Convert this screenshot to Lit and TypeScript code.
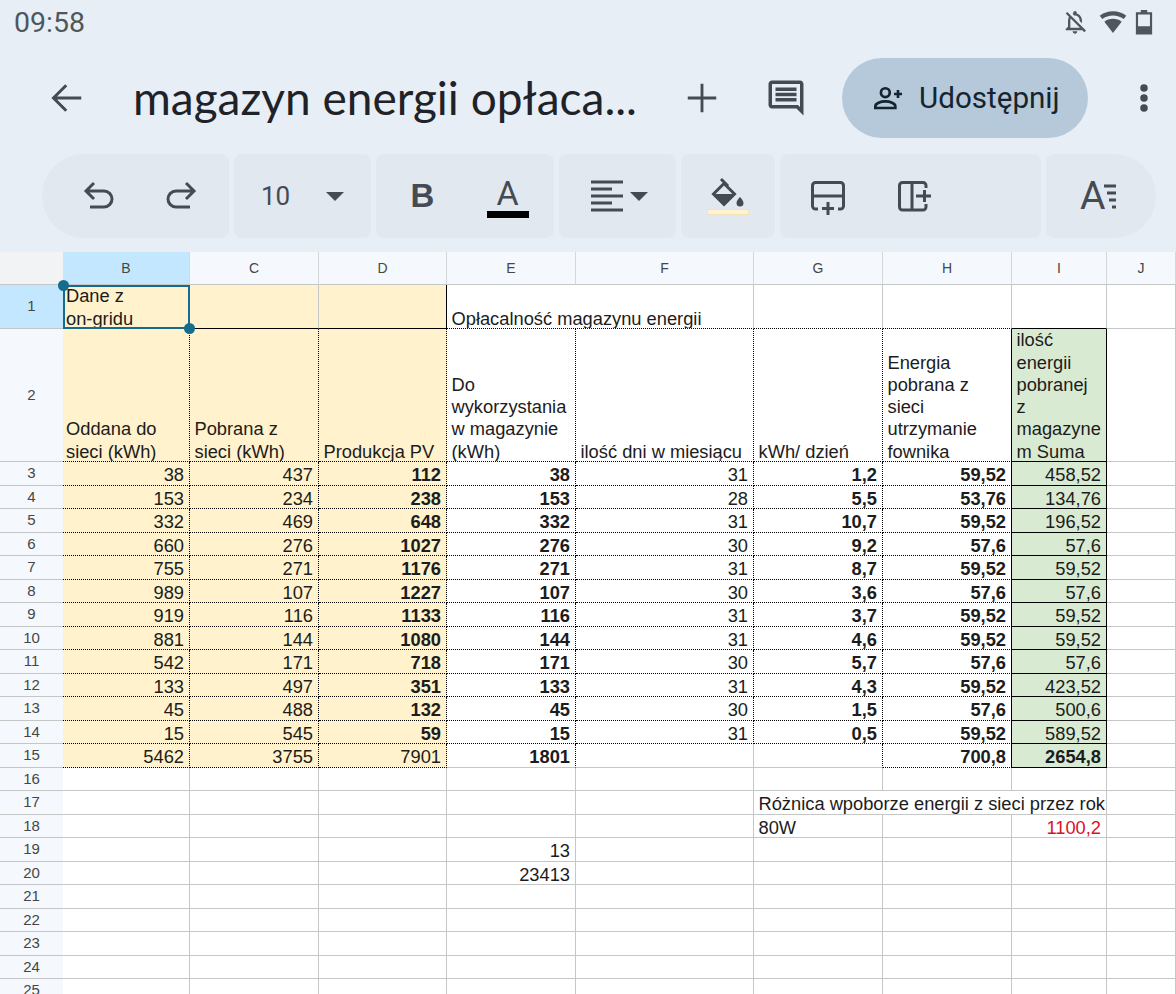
import { LitElement, css, html, svg } from "lit";
import { customElement } from "lit/decorators.js";

type Fill = "" | "y" | "g";
interface Cell {
  text?: string;
  bold?: boolean;
  right?: boolean;
  red?: boolean;
  fill?: Fill;
  span?: number;
  // border kinds: d = dotted black, s = solid black, empty = grey grid line
  br?: "" | "d" | "s";
  bb?: "" | "d" | "s";
  first?: boolean;
}

const COLS = ["B", "C", "D", "E", "F", "G", "H", "I", "J"];

const B = [38, 153, 332, 660, 755, 989, 919, 881, 542, 133, 45, 15];
const C = [437, 234, 469, 276, 271, 107, 116, 144, 171, 497, 488, 545];
const D = [112, 238, 648, 1027, 1176, 1227, 1133, 1080, 718, 351, 132, 59];
const E = [38, 153, 332, 276, 271, 107, 116, 144, 171, 133, 45, 15];
const F = [31, 28, 31, 30, 31, 30, 31, 31, 30, 31, 30, 31];
const G = ["1,2", "5,5", "10,7", "9,2", "8,7", "3,6", "3,7", "4,6", "5,7", "4,3", "1,5", "0,5"];
const H = ["59,52", "53,76", "59,52", "57,6", "59,52", "57,6", "59,52", "59,52", "57,6", "59,52", "57,6", "59,52"];
const I = ["458,52", "134,76", "196,52", "57,6", "59,52", "57,6", "59,52", "59,52", "57,6", "423,52", "500,6", "589,52"];

function buildRows(): Cell[][] {
  const rows: Cell[][] = [];
  rows.push([
    { text: "Dane z\non-gridu", fill: "y", bb: "s", first: true },
    { fill: "y", bb: "s" },
    { fill: "y", bb: "s", br: "s" },
    { text: "Opłacalność magazynu energii", span: 2, bb: "d" },
    { bb: "d" },
    { bb: "d" },
    { bb: "s" },
    {},
  ]);
  rows.push([
    { text: "Oddana do\nsieci (kWh)", fill: "y", br: "d", bb: "d", first: true },
    { text: "Pobrana z\nsieci (kWh)", fill: "y", br: "d", bb: "d" },
    { text: "Produkcja PV", fill: "y", br: "d", bb: "d" },
    { text: "Do\nwykorzystania\nw magazynie\n(kWh)", br: "d", bb: "d" },
    { text: "ilość dni w miesiącu", br: "d", bb: "d" },
    { text: "kWh/ dzień", br: "d", bb: "d" },
    { text: "Energia\npobrana z\nsieci\nutrzymanie\nfownika", br: "s", bb: "d" },
    { text: "ilość\nenergii\npobranej\nz\nmagazyne\nm Suma", fill: "g", br: "s", bb: "s" },
    {},
  ]);
  B.forEach((_, i) => {
    rows.push([
      { text: String(B[i]), right: true, fill: "y", br: "d", bb: "d", first: true },
      { text: String(C[i]), right: true, fill: "y", br: "d", bb: "d" },
      { text: String(D[i]), right: true, bold: true, fill: "y", br: "d", bb: "d" },
      { text: String(E[i]), right: true, bold: true, br: "d", bb: "d" },
      { text: String(F[i]), right: true, br: "d", bb: "d" },
      { text: G[i], right: true, bold: true, br: "d", bb: "d" },
      { text: H[i], right: true, bold: true, br: "s", bb: "d" },
      { text: I[i], right: true, fill: "g", br: "s", bb: "s" },
      {},
    ]);
  });
  rows.push([
    { text: "5462", right: true, fill: "y", br: "d", bb: "d", first: true },
    { text: "3755", right: true, fill: "y", br: "d", bb: "d" },
    { text: "7901", right: true, fill: "y", br: "d", bb: "d" },
    { text: "1801", right: true, bold: true, br: "d" },
    {},
    { br: "d" },
    { text: "700,8", right: true, bold: true, br: "s", bb: "d" },
    { text: "2654,8", right: true, bold: true, fill: "g", br: "s", bb: "s" },
    {},
  ]);
  const blank = (): Cell[] => [{ first: true }, {}, {}, {}, {}, {}, {}, {}, {}];
  rows.push(blank());
  const r17 = blank();
  r17.splice(5, 3, { text: "Różnica wpoborze energii z sieci przez rok", span: 3 });
  rows.push(r17);
  const r18 = blank();
  r18[5] = { text: "80W" };
  r18[7] = { text: "1100,2", right: true, red: true };
  rows.push(r18);
  const r19 = blank();
  r19[3] = { text: "13", right: true };
  rows.push(r19);
  const r20 = blank();
  r20[3] = { text: "23413", right: true };
  rows.push(r20);
  for (let i = 0; i < 5; i++) rows.push(blank());
  return rows;
}

const icon = (size: number, box: string, body: unknown) => html`
  <svg width=${size} height=${size} viewBox=${box} aria-hidden="true">${body}</svg>
`;

const ICONS = {
  bell: svg`<path fill="currentColor" d="M12 22c1.100 0 2-.900 2-2h-4c0 1.100.900 2 2 2zm0-15.500c2.490 0 4 2.020 4 4.500v.100l2 2V11c0-3.070-1.630-5.640-4.500-6.320V4c0-.830-.670-1.500-1.500-1.500s-1.500.670-1.500 1.500v.680c-.240.060-.470.150-.690.230l1.640 1.640c.180-.020.360-.050.550-.050zM5.410 3.350 4 4.760l2.810 2.810C6.290 8.570 6 9.740 6 11v5l-2 2v1h14.240l1.740 1.740 1.410-1.410L5.410 3.350zM16 17H8v-6c0-.680.120-1.320.340-1.900L16 16.760V17z"/>`,
  wifi: svg`<path fill="currentColor" d="M12 21.500 4.600 11.700C6.600 10.200 9.200 9.300 12 9.300s5.400.900 7.400 2.400z"/><path fill="currentColor" d="M2.900 9.500.600 6.600C3.700 4.200 7.700 2.800 12 2.800s8.300 1.400 11.400 3.800l-2.300 2.900C18.600 7.500 15.400 6.400 12 6.400S5.400 7.500 2.900 9.500z"/>`,
  battery: svg`<path fill="none" stroke="currentColor" stroke-width="2" d="M5.500 4h13v18.500h-13z"/><path fill="currentColor" d="M9 1h6v3H9zM5.500 16h13v6.500h-13z"/>`,
  back: svg`<path fill="none" stroke="currentColor" stroke-width="2" d="M21.500 12H3M11.500 3.500 3 12l8.500 8.500"/>`,
  plus: svg`<path fill="none" stroke="currentColor" stroke-width="1.900" d="M12 2.500v19M2.500 12h19"/>`,
  comment: svg`<path fill="currentColor" d="M21.990 4c0-1.100-.890-2-1.990-2H4c-1.100 0-2 .900-2 2v12c0 1.100.900 2 2 2h14l4 4-.010-18zM20 4v13.170L18.830 16H4V4h16zM6 12h12v2H6zm0-3h12v2H6zm0-3h12v2H6z"/>`,
  person: svg`<g fill="none" stroke="currentColor" stroke-width="2"><circle cx="10" cy="8" r="3.300"/><path d="M2.500 19.500v-1.300c0-2.200 4-3.700 7.500-3.700s7.500 1.500 7.500 3.700v1.300z"/><path d="M19.500 6v6M16.500 9h6"/></g>`,
  dots: svg`<g fill="currentColor"><circle cx="12" cy="4.500" r="2.800"/><circle cx="12" cy="12" r="2.800"/><circle cx="12" cy="19.500" r="2.800"/></g>`,
  undo: svg`<path fill="none" stroke="currentColor" stroke-width="3" d="M12 3 4 11l8 8M4 11h18a8 8 0 0 1 0 16H8"/>`,
  redo: svg`<path fill="none" stroke="currentColor" stroke-width="3" d="M20 3l8 8-8 8M28 11H10a8 8 0 0 0 0 16h14"/>`,
  align: svg`<path fill="none" stroke="currentColor" stroke-width="3" d="M0 2h32M0 9h21M0 16h32M0 23h21M0 30h32"/>`,
  fill: svg`<path fill="none" stroke="currentColor" stroke-width="3" d="M14 2l7 7M17 6.500 6.500 17 17 27.500 27.500 17z"/><path fill="currentColor" d="M5 17h24L17 29zM33 20s-3.500 3.500-3.500 6a3.500 3.500 0 0 0 7 0c0-2.500-3.500-6-3.500-6z"/>`,
  insRow: svg`<path fill="none" stroke="currentColor" stroke-width="3" d="M9 32H6.500a3 3 0 0 1-3-3V8.500a3 3 0 0 1 3-3h25a3 3 0 0 1 3 3V29a3 3 0 0 1-3 3H29M3.500 19h31M19 25v13M13 31.500h12"/>`,
  insCol: svg`<path fill="none" stroke="currentColor" stroke-width="3" d="M31 11V8.500a3 3 0 0 0-3-3H7.500a3 3 0 0 0-3 3V30a3 3 0 0 0 3 3H28a3 3 0 0 0 3-3v-3M17 5.500V33M21 19h15M29.500 13v12"/>`,
  wrap: svg`<path fill="none" stroke="currentColor" stroke-width="3" d="M1 2h12M4 9h9M6 16h7M9 23h4"/>`,
};

@customElement("app-root")
export class AppRoot extends LitElement {
  private rows = buildRows();

  private renderCell(c: Cell) {
    const cls = [
      "cell",
      c.right ? "right" : "",
      c.bold ? "bold" : "",
      c.red ? "red" : "",
      c.first ? "first" : "",
      c.fill ? `fill-${c.fill}` : "",
      c.br ? `br-${c.br}` : "",
      c.bb ? `bb-${c.bb}` : "",
      c.span ? `span-${c.span}` : "",
    ].join(" ");
    return html`<div class=${cls}>${c.text ? html`<span>${c.text}</span>` : ""}</div>`;
  }

  render() {
    return html`
      <div class="status">
        <span class="time">09:58</span>
        <div class="status-icons">
          <span class="bell">${icon(28, "0 0 24 24", ICONS.bell)}</span>
          ${icon(28, "0 0 24 24", ICONS.wifi)}
          ${icon(26, "0 0 24 24", ICONS.battery)}
        </div>
      </div>

      <div class="titlebar">
        <span class="back">${icon(36, "0 0 24 24", ICONS.back)}</span>
        <span class="doc">magazyn energii opłaca...</span>
        <span class="plus">${icon(36, "0 0 24 24", ICONS.plus)}</span>
        <span class="comment">${icon(42, "0 0 24 24", ICONS.comment)}</span>
        <div class="share">${icon(32, "0 0 24 24", ICONS.person)}<span>Udostępnij</span></div>
        <span class="dots">${icon(32, "0 0 24 24", ICONS.dots)}</span>
      </div>

      <div class="toolbar">
        <div class="grp g-undo">
          <span class="btn">${icon(32, "0 0 32 32", ICONS.undo)}</span>
          <span class="btn">${icon(32, "0 0 32 32", ICONS.redo)}</span>
        </div>
        <div class="grp g-size">
          <span class="size">10</span>
          <span class="caret"></span>
        </div>
        <div class="grp g-text">
          <span class="btn b">B</span>
          <span class="btn a"><span>A</span><i class="a-bar"></i></span>
        </div>
        <div class="grp g-align">
          ${icon(32, "0 0 32 32", ICONS.align)}
          <span class="caret"></span>
        </div>
        <div class="grp g-fill">
          <span class="fillicon">
            <svg width="42" height="32" viewBox="0 0 42 32" aria-hidden="true">${ICONS.fill}</svg>
            <i class="fill-bar"></i>
          </span>
        </div>
        <div class="grp g-ins">
          <span class="btn">${icon(38, "0 0 38 38", ICONS.insRow)}</span>
          <span class="btn">${icon(38, "0 0 38 38", ICONS.insCol)}</span>
        </div>
        <div class="grp g-wrap">
          <span class="wrapicon"><span>A</span>
            <svg width="14" height="25" viewBox="0 0 14 25" aria-hidden="true">${ICONS.wrap}</svg>
          </span>
        </div>
      </div>

      <div class="sheet">
        <div class="corner"></div>
        ${COLS.map((c) => html`<div class="colhead ${c === "B" ? "sel" : ""}">${c}</div>`)}
        ${this.rows.map(
          (row, i) => html`
            <div class="rowhead ${i === 0 ? "sel" : ""}">${i + 1}</div>
            ${row.map((c) => this.renderCell(c))}
          `
        )}
        <div class="selection">
          <i class="handle tl"></i>
          <i class="handle br"></i>
        </div>
      </div>
    `;
  }

  static styles = css`
    :host {
      display: block;
      width: 1176px;
      height: 994px;
      overflow: hidden;
      background: #e7eef6;
      font-family: Roboto, "Liberation Sans", sans-serif;
      color: #444b53;
    }

    svg {
      display: block;
    }

    /* status bar */
    .status {
      height: 44px;
      display: flex;
      align-items: center;
      justify-content: space-between;
      padding: 0 19px 0 14px;
    }
    .time {
      font-size: 28.5px;
      color: #50565e;
    }
    .status-icons {
      display: flex;
      align-items: center;
      gap: 4px;
      color: #50565e;
    }
    .bell {
      margin-right: 6px;
    }

    /* title row */
    .titlebar {
      height: 108px;
      padding-bottom: 2px;
      display: flex;
      align-items: center;
    }
    .back {
      margin-left: 49px;
      color: #444b53;
    }
    .doc {
      margin-left: 48px;
      width: 520px;
      margin-top: -2px;
      font-family: Lato, "Liberation Sans", sans-serif;
      font-size: 46px;
      color: #1f2329;
      white-space: nowrap;
    }
    .plus {
      margin-left: 31px;
    }
    .comment {
      margin-left: 45px;
    }
    .share {
      margin-left: 35px;
      width: 246px;
      height: 80px;
      box-sizing: border-box;
      border-radius: 40px;
      background: #b5c9da;
      display: flex;
      align-items: center;
      gap: 15px;
      padding-left: 30px;
      color: #16242f;
      font-size: 29.6px;
    }
    .dots {
      margin-left: 40px;
    }

    /* toolbar */
    .toolbar {
      height: 84px;
      display: flex;
      gap: 5px;
      margin-left: 42px;
    }
    .grp {
      background: #e1e8f0;
      border-radius: 8px;
      display: flex;
      align-items: center;
      box-sizing: border-box;
    }
    .btn {
      display: flex;
      align-items: center;
      justify-content: center;
    }
    .g-undo {
      width: 187px;
      padding-left: 14px;
      border-radius: 42px 8px 8px 42px;
    }
    .g-undo .btn {
      width: 84px;
    }
    .g-size {
      width: 137px;
      padding-left: 27px;
    }
    .size {
      width: 65px;
      font-size: 26px;
    }
    .caret {
      width: 0;
      height: 0;
      border: 9px solid transparent;
      border-top: 9px solid #444b53;
      border-bottom: 0;
    }
    .g-text {
      width: 178px;
      padding-left: 4px;
    }
    .g-text .btn {
      width: 85px;
      flex: none;
    }
    .b {
      font-family: "Liberation Sans", sans-serif;
      font-weight: 700;
      font-size: 33px;
    }
    .a {
      flex-direction: column;
      padding-top: 2px;
      font-size: 34px;
      line-height: 34px;
    }
    .a-bar {
      display: block;
      width: 42px;
      height: 7px;
      background: #000;
      margin-top: 1px;
    }
    .g-align {
      width: 117px;
      padding-left: 32px;
      gap: 7px;
    }
    .g-fill {
      width: 94px;
      justify-content: center;
    }
    .fillicon {
      display: flex;
      flex-direction: column;
      align-items: center;
    }
    .fill-bar {
      display: block;
      width: 42px;
      height: 6px;
      background: #fff2cc;
      border: 1px solid #f1e3bb;
      box-sizing: border-box;
    }
    .g-ins {
      width: 261px;
      padding-left: 5px;
    }
    .g-ins .btn {
      width: 86px;
    }
    .g-wrap {
      width: 110px;
      padding-left: 34px;
      border-radius: 8px 42px 42px 8px;
    }
    .wrapicon {
      display: flex;
      align-items: center;
      font-size: 39px;
      gap: 0;
    }
    .wrapicon svg {
      margin-left: -2px;
    }

    /* sheet */
    .sheet {
      margin-top: 14px;
      display: grid;
      grid-template-columns: 63px 127px 129px 128px 129px 178px 129px 129px 95px 69px;
      grid-template-rows: 33px 44px 133px repeat(23, 23.5px);
      background: #fff;
      font-family: "Liberation Sans", sans-serif;
      font-size: 18.3px;
      line-height: 22.3px;
      color: #1c1c1c;
      position: relative;
    }
    .corner {
      background: #f1f3f4;
      border-bottom: 1px solid #c4c7c5;
    }
    .colhead,
    .rowhead {
      display: flex;
      align-items: center;
      justify-content: center;
      box-sizing: border-box;
      font-size: 14px;
      color: #444746;
      background: #f5f9fe;
      border-bottom: 1px solid #c4c7c5;
    }
    .rowhead {
      font-size: 15px;
    }
    .colhead {
      border-right: 1px solid #d4d8db;
    }
    .colhead.sel,
    .rowhead.sel {
      background: #c2e7ff;
    }
    .cell {
      box-sizing: border-box;
      display: flex;
      align-items: flex-end;
      overflow: hidden;
      padding: 0 5px 0 4.5px;
      white-space: pre;
      border-right: 1px solid #c4c7c5;
      border-bottom: 1px solid #c4c7c5;
    }
    .cell > span {
      display: block;
      margin-bottom: -2px;
    }
    .cell.first {
      padding-left: 3px;
    }
    .right {
      justify-content: flex-end;
      text-align: right;
    }
    .bold {
      font-weight: 700;
    }
    .red {
      color: #d6132a;
    }
    .fill-y {
      background: #fff2cc;
    }
    .fill-g {
      background: #d9ead3;
    }
    .br-d {
      border-right: 1px dotted #000;
    }
    .br-s {
      border-right: 1px solid #000;
    }
    .bb-d {
      border-bottom: 1px dotted #000;
    }
    .bb-s {
      border-bottom: 1px solid #000;
    }
    .span-2 {
      grid-column: span 2;
    }
    .span-3 {
      grid-column: span 3;
    }

    /* active cell frame over B1, out of flow so it takes no grid slot */
    .selection {
      position: absolute;
      grid-column: 2 / 3;
      grid-row: 2 / 3;
      inset: 0;
      box-sizing: border-box;
      border: 2px solid #146c8e;
      pointer-events: none;
    }
    .handle {
      position: absolute;
      width: 11px;
      height: 11px;
      border-radius: 50%;
      background: #146c8e;
    }
    .handle.tl {
      left: -7px;
      top: -7px;
    }
    .handle.br {
      right: -7px;
      bottom: -7px;
    }
  `;
}
